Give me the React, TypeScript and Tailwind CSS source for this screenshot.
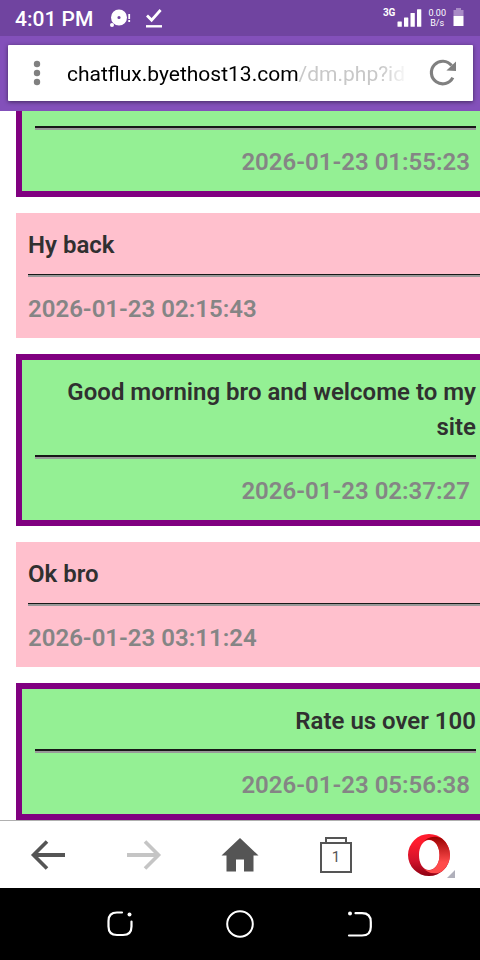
/**
 * Mobile browser showing a direct message thread.
 */
import React from 'react';
import { clsx } from 'clsx';

interface Message {
  id: number;
  text?: string;
  sentAt: string;
  mine: boolean;
}

const MESSAGES: Message[] = [
  { id: 1, sentAt: '2026-01-23 01:55:23', mine: true },
  { id: 2, text: 'Hy back', sentAt: '2026-01-23 02:15:43', mine: false },
  { id: 3, text: 'Good morning bro and welcome to my site', sentAt: '2026-01-23 02:37:27', mine: true },
  { id: 4, text: 'Ok bro', sentAt: '2026-01-23 03:11:24', mine: false },
  { id: 5, text: 'Rate us over 100', sentAt: '2026-01-23 05:56:38', mine: true },
];

function StatusBar() {
  return (
    <div className="flex h-9 shrink-0 items-center justify-between bg-[#7044a0] pl-[15px] pr-4 text-white">
      <div className="flex items-center">
        <span className="pt-0.5 text-[21px] leading-9 font-medium">4:01 PM</span>
        <svg width="24" height="20" viewBox="0 0 24 20" className="ml-4" fill="white">
          <path fillRule="evenodd" d="M10 1.500a8 8 0 1 1 0 16a8 8 0 0 1 0-16zM10 7.900a1.600 1.600 0 1 0 0 3.200a1.600 1.600 0 0 0 0-3.200z" />
          <circle cx="3" cy="17" r="2" />
          <rect x="19.300" y="6" width="1.800" height="5" />
          <rect x="19.300" y="12" width="1.800" height="2" />
        </svg>
        <svg width="18" height="20" viewBox="0 0 18 20" className="ml-3" fill="none" stroke="white">
          <path d="M2 7.500l4.600 4.600L15.600 2" strokeWidth="2.800" />
          <path d="M1 18.300h16" strokeWidth="2.400" />
        </svg>
      </div>
      <div className="flex h-full items-center">
        <span className="self-start pt-[7px] text-[10px] leading-3 font-bold">3G</span>
        <svg width="25" height="18" viewBox="0 0 25 18" className="ml-[2px]" fill="white">
          <rect x="0.500" y="12.500" width="4.300" height="5.300" rx="0.500" />
          <rect x="7" y="8.500" width="4.300" height="9.300" rx="0.500" />
          <rect x="13.500" y="4" width="4.300" height="13.800" rx="0.500" />
          <rect x="20" y="0.300" width="4.300" height="17.500" rx="0.500" />
        </svg>
        <span className="ml-1.5 text-center text-[9px] leading-[10px]">
          0.00
          <br />
          B/s
        </span>
        <svg width="11" height="20" viewBox="0 0 11 20" className="ml-[7px]">
          <path d="M3 0h5v2h2.500v6h-10V2H3z" fill="#a98bc6" />
          <path d="M0.500 8h10v10h-10z" fill="white" />
        </svg>
      </div>
    </div>
  );
}

function AddressBar() {
  return (
    <header className="shrink-0 bg-[#8350ba] pt-[9px] pr-[7px] pb-2.5 pl-2">
      <div className="flex h-14 items-center rounded-[1px] bg-white pr-3.5 pl-4 shadow-[0_1px_4px_rgba(0,0,0,0.5)]">
        <button type="button" aria-label="Page menu" className="flex h-10 w-[26px] items-center justify-center">
          <svg width="8" height="26" viewBox="0 0 8 26" fill="#808080">
            <circle cx="4" cy="4" r="3.200" />
            <circle cx="4" cy="13" r="3.200" />
            <circle cx="4" cy="22" r="3.200" />
          </svg>
        </button>
        <button
          type="button"
          aria-label="Edit address"
          className="ml-[17px] min-w-0 flex-1 overflow-hidden pt-0.5 text-left text-[21px] leading-10 whitespace-nowrap text-black mask-r-from-92% mask-r-to-100%"
        >
          chatflux.byethost13.com<span className="text-[#c8c8c8]">/dm.php?id</span>
        </button>
        <button type="button" aria-label="Reload" className="ml-[18px] flex h-10 w-8 items-center justify-center">
          <svg width="28" height="28" viewBox="0 0 28 28">
            <path d="M23.800 18.600A11.300 11.300 0 1 1 22.600 6.600" fill="none" stroke="#808080" strokeWidth="3.200" />
            <path d="M27 2.500V12l-9.600-0.600z" fill="#808080" />
          </svg>
        </button>
      </div>
    </header>
  );
}

function MessageCard({ message }: { message: Message }) {
  const { text, sentAt, mine } = message;

  return (
    <article
      className={clsx(
        'ml-4 shrink-0 pt-[15px] pb-[11px] text-[24px] leading-[35px] font-semibold',
        mine
          ? 'border-6 border-r-0 border-[#800080] bg-[#94f094] pr-1 pl-[13px] text-right'
          : 'bg-[#ffc0cd] pl-3'
      )}
    >
      {text && <p className="text-[#303030]">{text}</p>}
      <hr
        className={clsx(
          'mb-[15px] border-0 border-[#181818] bg-[#999999]',
          mine ? 'mt-2.5 h-1 border-t-2' : 'mt-[11px] h-[3px] border-t'
        )}
      />
      <p className={clsx('text-[#858585]', mine && 'pr-1.5')}>
        <time>{sentAt}</time>
      </p>
    </article>
  );
}

function BrowserToolbar() {
  const button = 'flex flex-1 items-center justify-center';

  return (
    <nav className="flex h-[68px] shrink-0 border-t border-[#b0b0b0] bg-white">
      <button type="button" aria-label="Back" className={button}>
        <svg width="36" height="32" viewBox="0 0 36 32" fill="none" stroke="#555555" strokeWidth="4">
          <path d="M35 16H4" />
          <path d="M17 2.500L3.500 16L17 29.500" strokeWidth="3.600" />
        </svg>
      </button>
      <button type="button" aria-label="Forward" disabled className={button}>
        <svg width="36" height="32" viewBox="0 0 36 32" fill="none" stroke="#c5c5c5" strokeWidth="4">
          <path d="M1 16h31" />
          <path d="M19 2.500L32.500 16L19 29.500" strokeWidth="3.600" />
        </svg>
      </button>
      <button type="button" aria-label="Home" className={button}>
        <svg width="38" height="34" viewBox="0 0 38 34" fill="#555555">
          <path d="M19 0L37.500 17.500H32.500V33.500H23V21.500H15V33.500H5.500V17.500H0.500z" />
        </svg>
      </button>
      <button type="button" aria-label="Tabs" className={button}>
        <span className="flex flex-col items-center text-[#555555]">
          <span className="h-[5px] w-[22px] border-2 border-b-0 border-current" />
          <span className="flex h-[31px] w-8 items-center justify-center border-2 border-current text-[15px] leading-5">
            1
          </span>
        </span>
      </button>
      <button type="button" aria-label="Opera menu" className={button}>
        <svg width="50" height="46" viewBox="0 0 50 46">
          <defs>
            <linearGradient id="operaOuter" x1="0" y1="0" x2="0" y2="1">
              <stop offset="0.2" stopColor="#ff1b2d" />
              <stop offset="0.65" stopColor="#d0122a" />
              <stop offset="1" stopColor="#8f0012" />
            </linearGradient>
            <linearGradient id="operaInner" x1="0" y1="0" x2="0" y2="1">
              <stop offset="0" stopColor="#980000" />
              <stop offset="0.7" stopColor="#ff4b4b" />
            </linearGradient>
          </defs>
          <path
            fillRule="evenodd"
            fill="url(#operaOuter)"
            d="M22 2a21 21 0 1 0 0 42a21 21 0 1 0 0-42zM22 8C28.500 8 32.500 15 32.500 23S28.500 38 22 38S12 31 12 23S16 8 22 8z"
          />
          <path
            fill="url(#operaInner)"
            d="M16 10.200C20 5 27.500 2.800 35 6.600A21 21 0 0 1 35 39.400C27.500 43.200 20 41 16 35.800C18 37.600 20 38.200 22 38.200C28.500 38.200 32.500 31 32.500 23S28.500 7.800 22 7.800C20 7.800 18 8.400 16 10.200z"
          />
          <path d="M48 38v8h-8z" fill="#b0b0bb" />
        </svg>
      </button>
    </nav>
  );
}

function SystemNav() {
  return (
    <nav className="flex h-[72px] shrink-0 items-center justify-center gap-[92px] bg-black">
      <button type="button" aria-label="Recent apps">
        <svg width="28" height="28" viewBox="0 0 28 28" fill="none" stroke="white" strokeWidth="2.200" strokeLinecap="round">
          <path d="M16 2.500H11Q2.500 2.500 2.500 11V16.500Q2.500 25 11 25H17Q25.500 25 25.500 16.500V11.500" />
          <circle cx="23.500" cy="4.500" r="2" fill="white" stroke="none" />
        </svg>
      </button>
      <button type="button" aria-label="Home screen">
        <svg width="28" height="28" viewBox="0 0 28 28" fill="none" stroke="white" strokeWidth="2">
          <circle cx="14" cy="14" r="12.800" />
        </svg>
      </button>
      <button type="button" aria-label="System back">
        <svg width="28" height="28" viewBox="0 0 28 28" fill="none" stroke="white" strokeWidth="2.200" strokeLinecap="round">
          <path d="M9.500 3.200H16Q24.800 3.200 24.800 12V17Q24.800 25.500 16 25.500H3" />
          <circle cx="4" cy="3.400" r="2" fill="white" stroke="none" />
        </svg>
      </button>
    </nav>
  );
}

export default function App() {
  return (
    <div className="flex h-screen flex-col overflow-hidden bg-white font-['Roboto',sans-serif]">
      <StatusBar />
      <AddressBar />
      <main className="flex min-h-0 flex-1 flex-col justify-end gap-4 overflow-hidden">
        {MESSAGES.map((message) => (
          <MessageCard key={message.id} message={message} />
        ))}
      </main>
      <BrowserToolbar />
      <SystemNav />
    </div>
  );
}
